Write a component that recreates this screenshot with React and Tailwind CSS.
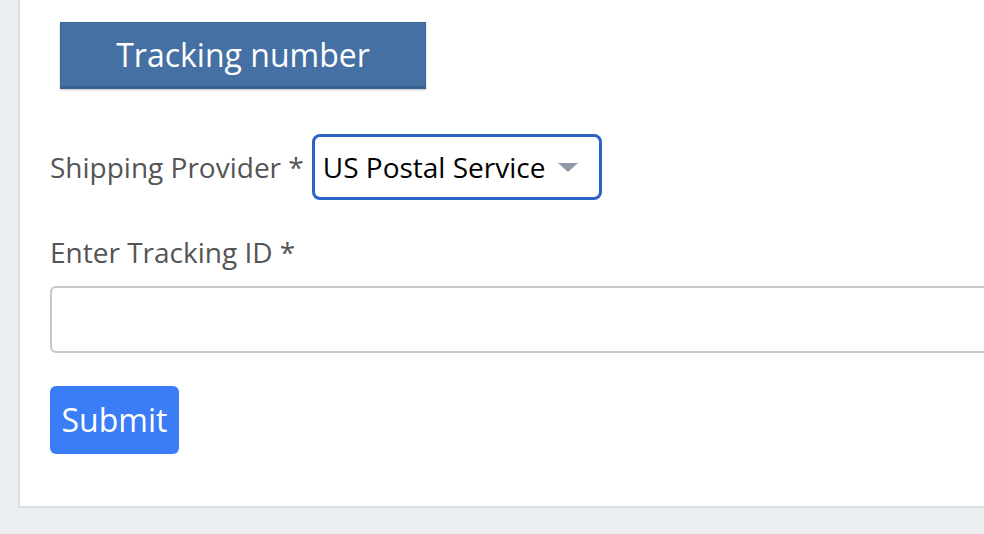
import React from 'react';

const font = { fontFamily: '"Open Sans", "Noto Sans", sans-serif' };

function App() {
  return (
    <div className="w-[984px] h-[534px] overflow-hidden bg-[#eaeef0]" style={font}>
      <div className="ml-[18px] w-[1100px] bg-white border-l-2 border-b-2 border-[#d9dfe4] pt-[22px] pb-[52px] pl-[30px]">
        <div className="ml-[10px] w-[366px] h-[67px] flex items-center justify-center bg-[#4470a3] border border-[#3d6796] border-b-[3px] border-b-[#3a6290] text-white text-[32px] shadow-[0_1px_2px_rgba(0,0,0,0.25)]">
          Tracking number
        </div>

        <div className="mt-[45px] flex items-center">
          <label className="text-[28px] text-[#555555]">Shipping Provider *</label>
          <div className="ml-[8px] w-[290px] h-[66px] flex items-center border-[3px] border-[#2c62c4] rounded-[8px] pl-[8px]">
            <span className="text-[28px] text-black">US Postal Service</span>
            <svg className="ml-[13px]" width="20" height="9" viewBox="0 0 20 9">
              <polygon points="0,0 20,0 10,9" fill="#8e99a5" />
            </svg>
          </div>
        </div>

        <div className="mt-[32px] h-[40px] flex items-center text-[28px] text-[#555555]">Enter Tracking ID *</div>

        <input className="mt-[14px] block w-[1100px] h-[67px] border-2 border-[#c8c8c8] rounded-[6px] outline-none" />

        <button className="mt-[33px] w-[129px] h-[68px] rounded-[6px] bg-[#3a7df6] text-white text-[32px]">Submit</button>
      </div>
    </div>
  );
}

export default App;
